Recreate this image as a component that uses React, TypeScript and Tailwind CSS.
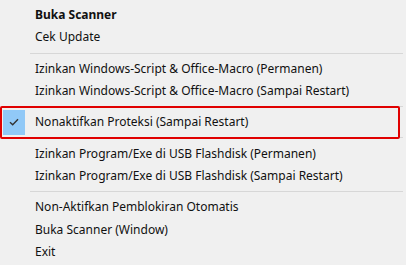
import React from "react";

const Row = ({ children, bold }: { children: React.ReactNode; bold?: boolean }) => (
  <div className={`h-[22.3px] flex items-center pl-[35px] whitespace-nowrap ${bold ? "font-bold" : ""}`}>{children}</div>
);

const Sep = () => (
  <div className="h-[9px] flex items-center pl-[30px] pr-[3px]">
    <div className="h-px w-full bg-[#d7d7d7]" />
  </div>
);

export default function App() {
  return (
    <div className="w-[406px] h-[265px] bg-[#f0f0f0] text-[#111] text-[12px] font-['Noto_Sans',sans-serif] pt-[4px] overflow-hidden">
      <Row bold>Buka Scanner</Row>
      <Row>Cek Update</Row>
      <Sep />
      <Row>Izinkan Windows-Script &amp; Office-Macro (Permanen)</Row>
      <Row>Izinkan Windows-Script &amp; Office-Macro (Sampai Restart)</Row>
      <div className="relative">
        <Sep />
        <div className="h-[22.3px] flex items-center whitespace-nowrap">
          <div className="w-[35px] h-full flex items-center pl-[3px]">
            <div className="w-[22px] h-[25px] bg-[#91c9f7] flex items-center justify-center">
              <svg width="10" height="8" viewBox="0 0 10 8">
                <path d="M1 4.2 L3.7 6.8 L9 1.2" fill="none" stroke="#333" strokeWidth="1.4" />
              </svg>
            </div>
          </div>
          <span>Nonaktifkan Proteksi (Sampai Restart)</span>
        </div>
        <Sep />
        <div className="absolute left-0 top-[4px] w-[400px] h-[33px] border-[2.5px] border-[#e00000] rounded-[2px] pointer-events-none" />
      </div>
      <Row>Izinkan Program/Exe di USB Flashdisk (Permanen)</Row>
      <Row>Izinkan Program/Exe di USB Flashdisk (Sampai Restart)</Row>
      <Sep />
      <Row>Non-Aktifkan Pemblokiran Otomatis</Row>
      <Row>Buka Scanner (Window)</Row>
      <Row>Exit</Row>
    </div>
  );
}
